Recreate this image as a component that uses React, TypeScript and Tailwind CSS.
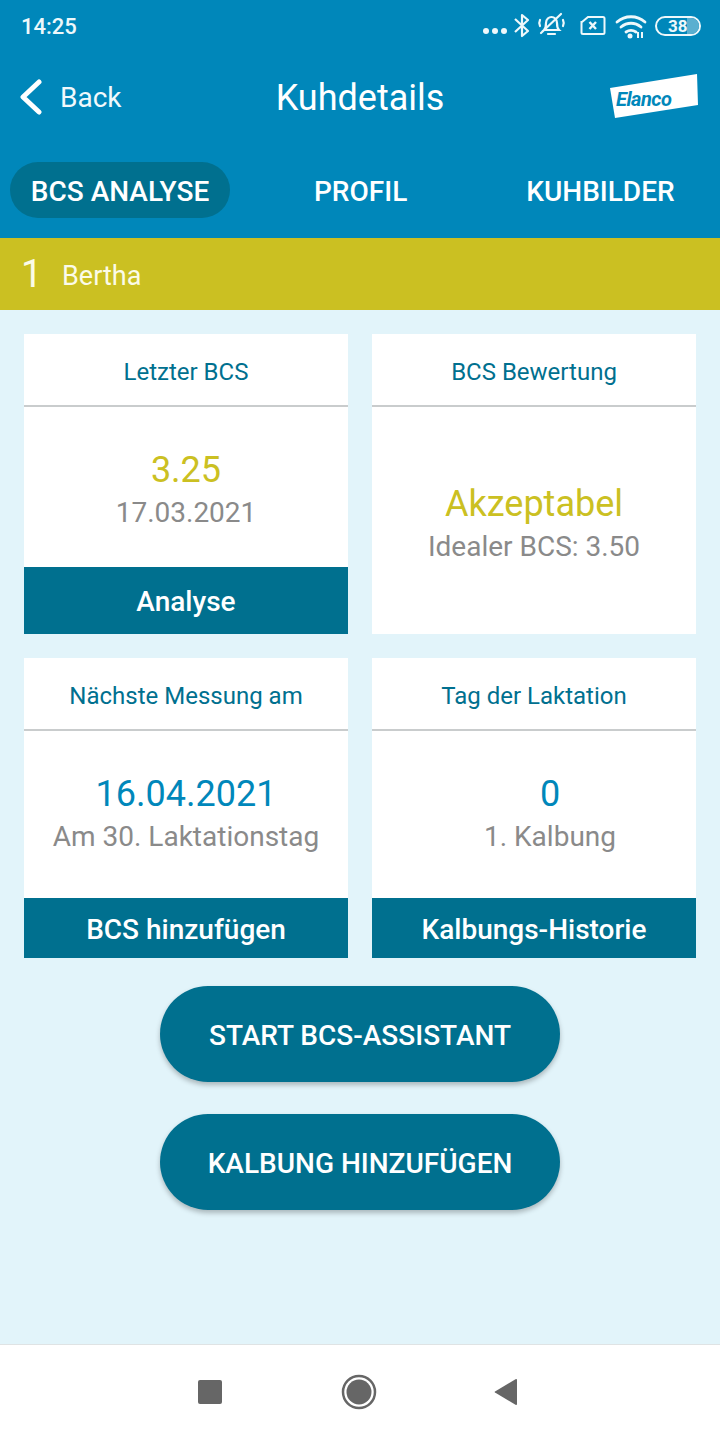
import React from "react"

const font = { fontFamily: "Roboto, 'Liberation Sans', sans-serif" }

// viewBox uses page coordinates so the glyphs can be lined up with the screenshot
const StatusIcons = () => (
  <svg width="176" height="52" viewBox="478 0 176 52" fill="none" stroke="#eef8fb">
    <circle cx="486" cy="31" r="3" fill="#eef8fb" stroke="none" />
    <circle cx="495" cy="31" r="3" fill="#eef8fb" stroke="none" />
    <circle cx="504" cy="31" r="3" fill="#eef8fb" stroke="none" />
    <path d="M515 19l13 12-6 5V15l6 5-13 12" strokeWidth="2.200" strokeLinejoin="round" />
    <path d="M544 30c2-2 2-4 2-7 0-4 3-6 5.500-6s5.500 2 5.500 6c0 3 0 5 2 7h-15zM548 34h7M541 33l20-19" strokeWidth="2.200" strokeLinecap="round" />
    <path d="M540 20c-1 2-1 4 0 6M563 20c1 2 1 4 0 6" strokeWidth="2.200" strokeLinecap="round" />
    <path d="M582 22l6-5h15a1.500 1.500 0 0 1 1.500 1.500v14a1.500 1.500 0 0 1-1.500 1.500h-20a1.500 1.500 0 0 1-1.500-1.500V22z" strokeWidth="2" />
    <path d="M589.500 22l6.500 7M596 22l-6.500 7" strokeWidth="2.400" />
    <path d="M617 22c8-7 20-7 28 0M621 27c6-5 14-5 20 0M626 32c3-2 7-2 10 0" strokeWidth="2.800" strokeLinecap="round" />
    <circle cx="630" cy="36" r="2.500" fill="#eef8fb" stroke="none" />
    <path d="M638 32v6M642 32v6" strokeWidth="2" />
  </svg>
)

const Battery = () => (
  <div className="relative ml-[1px] flex h-[20px] w-[46px] items-center rounded-full border-2 border-[#eef8fb] text-[17px] font-bold leading-[16px] text-[#eef8fb]">
    <div className="absolute inset-y-0 right-0 w-[12px] rounded-r-full bg-[#5aafd0]" />
    <span className="relative ml-[11px]">38</span>
  </div>
)

const ElancoLogo = () => (
  <div className="relative -mt-[2px] h-[44px] w-[88px]">
    <svg width="88" height="44" viewBox="0 0 88 44" className="absolute inset-0">
      <polygon points="0,14 87,0 88,31 5,44" fill="#fff" />
    </svg>
    <span className="absolute left-[6px] top-[13px] text-[20px] font-bold italic leading-[24px] tracking-[-0.5px] text-[#0087ba]">
      Elanco
    </span>
  </div>
)

interface CardProps {
  title: string
  value: string
  sub: string
  valueColor: string
  action?: string
  actionHeight?: string
  bodyClass: string
}

const Card: React.FC<CardProps> = ({ title, value, sub, valueColor, action, actionHeight, bodyClass }) => (
  <div className="flex h-[300px] flex-col bg-white">
    <div className="flex h-[73px] shrink-0 items-center justify-center border-b-2 border-[#c9cccd] pt-[4px] text-[24px] text-[#00708f]">
      {title}
    </div>
    <div className={`flex flex-1 flex-col items-center justify-center ${bodyClass}`}>
      <div className={`text-[36px] leading-[42px] ${valueColor}`}>{value}</div>
      <div className="text-[28px] leading-[44px] text-[#8a8a8a]">{sub}</div>
    </div>
    {action && (
      <div className={`flex shrink-0 items-center justify-center bg-[#00708f] pt-[3px] text-[28px] font-medium text-white ${actionHeight}`}>
        {action}
      </div>
    )}
  </div>
)

const PillButton: React.FC<{ label: string }> = ({ label }) => (
  <button className="flex h-[96px] w-[400px] items-center justify-center rounded-[48px] bg-[#00708f] pt-[3px] text-[28px] font-medium text-white shadow-[0_3px_5px_rgba(0,0,0,0.25)]">
    {label}
  </button>
)

export default function App() {
  return (
    <div className="flex h-[1440px] w-[720px] flex-col overflow-hidden bg-[#e2f4fa]" style={font}>
      <header className="h-[238px] shrink-0 bg-[#0087ba] text-white">
        <div className="flex h-[52px] items-center pl-[21px]">
          <span className="w-[457px] text-[22px] font-medium text-[#eef8fb]">14:25</span>
          <StatusIcons />
          <Battery />
        </div>
        <div className="relative flex h-[90px] items-center justify-between pl-[19px] pr-[22px]">
          <div className="flex items-center gap-[18px]">
            <svg width="23" height="36" viewBox="0 0 23 36" fill="none">
              <path d="M20 3L4 18l16 15" stroke="#fff" strokeWidth="5" strokeLinecap="round" strokeLinejoin="round" />
            </svg>
            <span className="pt-[2px] text-[28px] text-[#f1f9fc]">Back</span>
          </div>
          <h1 className="absolute inset-x-0 pt-[2px] text-center text-[36px] font-normal">Kuhdetails</h1>
          <ElancoLogo />
        </div>
        <div className="mt-[20px] flex h-[56px] items-center text-[28px] font-medium">
          <div className="ml-[10px] flex h-[56px] w-[220px] items-center justify-center rounded-[28px] bg-[#00708f] pt-[4px]">
            BCS ANALYSE
          </div>
          <div className="ml-[84px] pt-[4px]">PROFIL</div>
          <div className="ml-[119px] pt-[4px]">KUHBILDER</div>
        </div>
      </header>

      <div className="flex h-[72px] shrink-0 items-center bg-[#cbc022] pl-[21px] text-[#fbfbe8]">
        <span className="w-[41px] text-[38px]">1</span>
        <span className="pt-[5px] text-[27px]">Bertha</span>
      </div>

      <main className="flex-1">
        <div className="grid grid-cols-2 gap-[24px] px-[24px] pt-[24px]">
          <Card title="Letzter BCS" value="3.25" sub="17.03.2021" valueColor="text-[#cbc022]" action="Analyse" actionHeight="h-[67px]" bodyClass="pt-[10px]" />
          <Card title="BCS Bewertung" value="Akzeptabel" sub="Idealer BCS: 3.50" valueColor="text-[#cbc022]" bodyClass="pt-[10px]" />
          <Card title="Nächste Messung am" value="16.04.2021" sub="Am 30. Laktationstag" valueColor="text-[#0087ba]" action="BCS hinzufügen" actionHeight="h-[60px]" bodyClass="pt-[2px]" />
          <Card title="Tag der Laktation" value="0" sub="1. Kalbung" valueColor="text-[#0087ba]" action="Kalbungs-Historie" actionHeight="h-[60px]" bodyClass="pt-[2px] pl-[32px]" />
        </div>
        <div className="mt-[28px] flex flex-col items-center gap-[32px]">
          <PillButton label="START BCS-ASSISTANT" />
          <PillButton label="KALBUNG HINZUFÜGEN" />
        </div>
      </main>

      <nav className="flex h-[96px] shrink-0 items-center border-t border-[#dfe3e4] bg-white pb-[2px]">
        <div className="ml-[198px] h-[24px] w-[24px] rounded-[2px] bg-[#666666]" />
        <svg width="36" height="36" viewBox="0 0 36 36" className="ml-[119px]">
          <circle cx="18" cy="18" r="16" fill="none" stroke="#666666" strokeWidth="2.500" />
          <circle cx="18" cy="18" r="12.500" fill="#666666" />
        </svg>
        <svg width="24" height="28" viewBox="0 0 24 28" className="ml-[117px]">
          <path d="M23 2v24a1 1 0 0 1-1.500.800L1 14.500a.6.6 0 0 1 0-1L21.500 1.200A1 1 0 0 1 23 2z" fill="#666666" />
        </svg>
      </nav>
    </div>
  )
}
